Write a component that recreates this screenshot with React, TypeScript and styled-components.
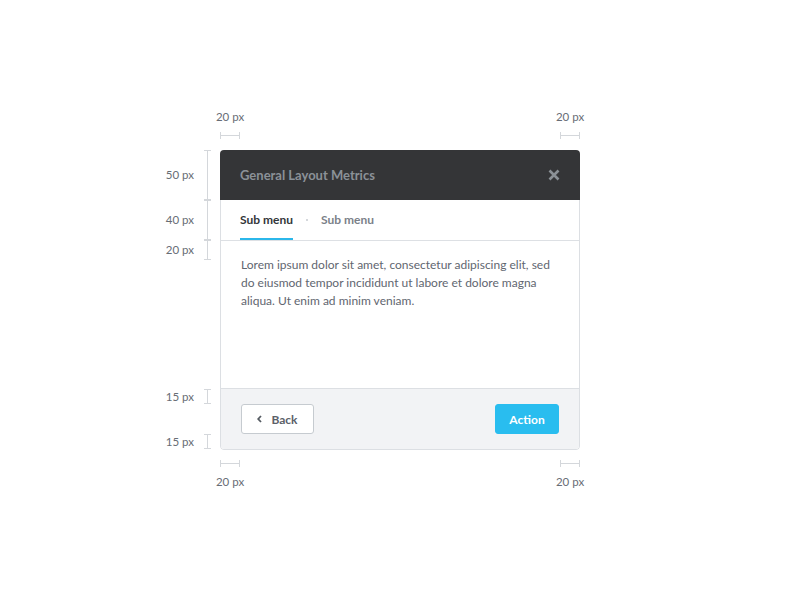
import React from 'react';
import styled, {createGlobalStyle} from 'styled-components';

const GlobalStyle = createGlobalStyle`
  body {
    margin: 0;
    background: #ffffff;
    font-family: Lato, "Liberation Sans", sans-serif;
  }
`;

const rule = '#d4d7db';

const Canvas = styled.div`
  display: grid;
  grid-template-columns: 60px 360px;
  grid-template-rows: auto 300px auto;
  margin-left: 160px;
  padding-top: 110px;
`;

const HRow = styled.div<{top?: boolean}>`
  grid-column: 2;
  display: flex;
  justify-content: space-between;
  padding: ${(p) => (p.top ? '0 0 11px 0' : '10px 0 0 0')};
`;

const HMeasure = styled.div<{top?: boolean}>`
  width: 20px;
  display: flex;
  flex-direction: ${(p) => (p.top ? 'column' : 'column-reverse')};
  align-items: center;
  gap: 8px;
`;

const Label = styled.span`
  font-size: 11.5px;
  line-height: 14px;
  color: #676d75;
  white-space: nowrap;
`;

const HRuler = styled.div`
  width: 20px;
  height: 7px;
  box-sizing: border-box;
  border-left: 1px solid ${rule};
  border-right: 1px solid ${rule};
  background: linear-gradient(to bottom, transparent 3px, ${rule} 3px, ${rule} 4px, transparent 4px);
`;

const VColumn = styled.div`
  grid-column: 1;
  grid-row: 2;
  display: flex;
  flex-direction: column;
`;

const VMeasure = styled.div<{h: number}>`
  height: ${(p) => p.h}px;
  flex: none;
  display: flex;
  align-items: center;
  justify-content: flex-end;
  gap: 10px;
  padding-right: 9px;
`;

const Spacer = styled.div<{h?: number}>`
  flex: ${(p) => (p.h ? `0 0 ${p.h}px` : '1')};
`;

const VRuler = styled.div`
  width: 7px;
  align-self: stretch;
  box-sizing: border-box;
  border-top: 1px solid ${rule};
  border-bottom: 1px solid ${rule};
  background: linear-gradient(to right, transparent 3px, ${rule} 3px, ${rule} 4px, transparent 4px);
`;

const Dialog = styled.div`
  grid-column: 2;
  grid-row: 2;
  display: flex;
  flex-direction: column;
  border-radius: 4px;
  overflow: hidden;
`;

const Header = styled.div`
  height: 50px;
  flex: none;
  background: #343537;
  display: flex;
  align-items: center;
  justify-content: space-between;
  padding: 0 20px;
`;

const Title = styled.h1`
  margin: 0;
  font-size: 13px;
  font-weight: 700;
  color: #8b9197;
`;

const Panel = styled.div`
  flex: 1;
  display: flex;
  flex-direction: column;
  border: 1px solid #dcdfe3;
  border-top: none;
  border-radius: 0 0 4px 4px;
  overflow: hidden;
`;

const TabBar = styled.div`
  height: 40px;
  flex: none;
  display: flex;
  align-items: stretch;
  padding-left: 19px;
  border-bottom: 1px solid #dde0e4;
`;

const Tab = styled.div<{active?: boolean}>`
  display: flex;
  align-items: center;
  box-sizing: border-box;
  font-size: 12px;
  font-weight: 700;
  color: ${(p) => (p.active ? '#33363a' : '#7b8189')};
  border-bottom: 2px solid ${(p) => (p.active ? '#2bb7ea' : 'transparent')};
`;

const Dot = styled.span`
  align-self: center;
  width: 2px;
  height: 2px;
  margin: 0 13px;
  background: #c7cbd0;
  border-radius: 1px;
`;

const Content = styled.p`
  flex: 1;
  margin: 0;
  padding: 15px 20px 0;
  font-size: 12px;
  line-height: 18px;
  color: #5f6670;
`;

const Footer = styled.div`
  flex: none;
  display: flex;
  justify-content: space-between;
  padding: 15px 20px;
  background: #f2f3f5;
  border-top: 1px solid #dcdfe3;
`;

const Button = styled.button<{primary?: boolean}>`
  height: 30px;
  width: ${(p) => (p.primary ? 64 : 73)}px;
  display: flex;
  align-items: center;
  justify-content: center;
  gap: 9px;
  padding: 0;
  border-radius: 3px;
  font-family: inherit;
  font-size: 12px;
  font-weight: 700;
  border: 1px solid ${(p) => (p.primary ? '#29bdef' : '#c6cbd0')};
  background: ${(p) => (p.primary ? '#29bdef' : '#ffffff')};
  color: ${(p) => (p.primary ? '#ffffff' : '#5b6169')};
`;

const Close = () => (
  <svg width="12" height="12" viewBox="0 0 12 12">
    <path d="M1.5 1.5 L10.5 10.5 M10.5 1.5 L1.5 10.5" stroke="#8b9196" strokeWidth="2.6" />
  </svg>
);

const Chevron = () => (
  <svg width="5" height="8" viewBox="0 0 5 8">
    <path d="M4 1 L1.2 4 L4 7" stroke="#555b62" strokeWidth="1.8" fill="none" />
  </svg>
);

const HPair = ({top}: {top?: boolean}) => (
  <HRow top={top}>
    <HMeasure top={top}>
      <Label>20 px</Label>
      <HRuler />
    </HMeasure>
    <HMeasure top={top}>
      <Label>20 px</Label>
      <HRuler />
    </HMeasure>
  </HRow>
);

const Measure = ({h, label}: {h: number; label?: string}) => (
  <VMeasure h={h}>
    {label && <Label>{label}</Label>}
    <VRuler />
  </VMeasure>
);

export default function App() {
  return (
    <>
      <GlobalStyle />
      <Canvas>
        <HPair top />
        <VColumn>
          <Measure h={50} label="50 px" />
          <Measure h={40} label="40 px" />
          <Measure h={20} label="20 px" />
          <Spacer />
          <Measure h={15} label="15 px" />
          <Spacer h={30} />
          <Measure h={15} label="15 px" />
          <Spacer h={1} />
        </VColumn>
        <Dialog>
          <Header>
            <Title>General Layout Metrics</Title>
            <Close />
          </Header>
          <Panel>
            <TabBar>
              <Tab active>Sub menu</Tab>
              <Dot />
              <Tab>Sub menu</Tab>
            </TabBar>
            <Content>
              Lorem ipsum dolor sit amet, consectetur adipiscing elit, sed do eiusmod tempor incididunt ut labore et
              dolore magna aliqua. Ut enim ad minim veniam.
            </Content>
            <Footer>
              <Button>
                <Chevron />
                Back
              </Button>
              <Button primary>Action</Button>
            </Footer>
          </Panel>
        </Dialog>
        <HPair />
      </Canvas>
    </>
  );
}
